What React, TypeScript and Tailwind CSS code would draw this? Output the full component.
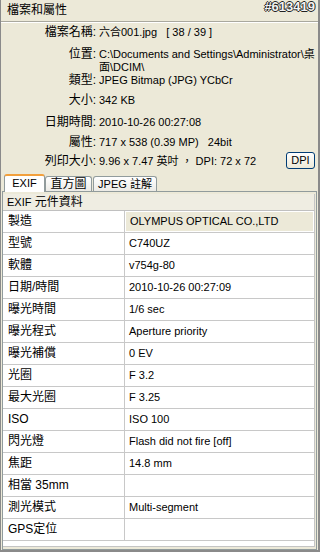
const rows: [string, string][] = [
  ["製造", "OLYMPUS OPTICAL CO.,LTD"],
  ["型號", "C740UZ"],
  ["軟體", "v754g-80"],
  ["日期/時間", "2010-10-26 00:27:09"],
  ["曝光時間", "1/6 sec"],
  ["曝光程式", "Aperture priority"],
  ["曝光補償", "0 EV"],
  ["光圈", "F 3.2"],
  ["最大光圈", "F 3.25"],
  ["ISO", "ISO 100"],
  ["閃光燈", "Flash did not fire [off]"],
  ["焦距", "14.8 mm"],
  ["相當 35mm", ""],
  ["測光模式", "Multi-segment"],
  ["GPS定位", ""],
];

type InfoRowProp = {
  label: string;
  className?: string;
  children: React.ReactNode;
};

function InfoRow({ label, className, children }: InfoRowProp) {
  return (
    <div className={`grid grid-cols-[96px_1fr] items-start leading-[13px] ${className ?? ""}`}>
      <div className="text-right text-[12px] whitespace-nowrap pr-[1px]">{label}</div>
      <div className="pl-[2px] text-[11px] whitespace-nowrap">{children}</div>
    </div>
  );
}

export default function App() {
  return (
    <div className="w-[320px] h-[552px] bg-[#ECE9D8] border-l border-r-2 border-b-2 border-[#8a8a8a] flex flex-col text-black font-['Tahoma','Liberation_Sans','Noto_Sans_CJK_TC',sans-serif] overflow-hidden">
      {/* title */}
      <div className="h-[22px] shrink-0 flex items-center justify-between pl-[6px] pr-[3px] border-b border-[#a9a89e] shadow-[0_1px_0_#ffffff]">
        <span className="text-[12px] leading-[13px]">檔案和屬性</span>
        <span className="text-[13px] font-bold leading-[13px] -mt-[8px] text-[#f2f2f2] [text-shadow:1px_0_0_#222,-1px_0_0_#222,0_1px_0_#222,0_-1px_0_#222]">
          #613419
        </span>
      </div>

      {/* file info */}
      <div className="flex flex-col pr-[3px]">
        <InfoRow label="檔案名稱:" className="mt-[4px]">
          六合001.jpg&nbsp;&nbsp;&nbsp;[ 38 / 39 ]
        </InfoRow>
        <InfoRow label="位置:" className="mt-[9px]">
          C:\Documents and Settings\Administrator\桌
          <br />
          面\DCIM\
        </InfoRow>
        <InfoRow label="類型:">JPEG Bitmap (JPG) YCbCr</InfoRow>
        <InfoRow label="大小:" className="mt-[7px]">
          342 KB
        </InfoRow>
        <InfoRow label="日期時間:" className="mt-[9px]">
          2010-10-26 00:27:08
        </InfoRow>
        <InfoRow label="屬性:" className="mt-[7px]">
          717 x 538 (0.39 MP)&nbsp;&nbsp;&nbsp;24bit
        </InfoRow>
        <div className="grid grid-cols-[96px_1fr] items-center mt-[4px] h-[17px]">
          <div className="text-right text-[12px] leading-[13px] pr-[1px]">列印大小:</div>
          <div className="pl-[2px] flex items-center justify-between text-[11px] leading-[13px]">
            <span>9.96 x 7.47 英吋 ，&nbsp;DPI: 72 x 72</span>
            <button className="w-[29px] h-[17px] -mt-[3px] rounded-[3px] border border-[#003c74] bg-gradient-to-b from-white to-[#ece9d8] text-[11px] leading-[13px]">
              DPI
            </button>
          </div>
        </div>
      </div>

      {/* tabs */}
      <div className="flex items-end pl-[3px] mt-[2px] h-[19px] shrink-0 relative z-10">
        <div className="w-[41px] h-[18px] bg-white border border-b-0 border-[#919b9c] border-t-[2px] border-t-[#f2a03c] rounded-t-[3px] flex items-center justify-center text-[11px] leading-[13px] -mb-px pb-[1px]">
          EXIF
        </div>
        <div className="w-[47px] h-[15px] bg-gradient-to-b from-white to-[#ecebe6] border border-b-0 border-[#919b9c] rounded-t-[3px] flex items-center justify-center text-[12px] leading-[13px]">
          直方圖
        </div>
        <div className="w-[64px] h-[15px] ml-[1px] bg-gradient-to-b from-white to-[#ecebe6] border border-b-0 border-[#919b9c] rounded-t-[3px] flex items-center justify-center text-[11px] leading-[13px]">
          JPEG 註解
        </div>
      </div>

      {/* panel */}
      <div className="flex-1 ml-[1px] mr-[1px] border border-[#919b9c] bg-[#ECE9D8] pt-[2px] pr-[1px] pb-[2px] flex flex-col">
        <div className="flex-1 bg-white border-r border-b border-[#c4c4c4] flex flex-col">
          <div className="h-[17px] shrink-0 bg-[#efede2] border-b border-[#c0c0c0] pl-[4px] flex items-center text-[12px] leading-[13px]">
            <span className="text-[11px]">EXIF</span>&nbsp;元件資料
          </div>
          {rows.map(([label, value], i) => (
            <div
              key={label}
              className="h-[22px] shrink-0 grid grid-cols-[122px_1fr] border-b border-[#c8c8c8]"
            >
              <div className="border-r border-[#c8c8c8] pl-[5px] flex items-center text-[12px] leading-[13px] whitespace-nowrap">
                {label}
              </div>
              <div
                className={`flex items-center pl-[4px] text-[11px] leading-[13px] whitespace-nowrap ${
                  i === 0 ? "bg-[#ECE9D8] m-[1px] pl-[3px]" : ""
                }`}
              >
                {value}
              </div>
            </div>
          ))}
        </div>
      </div>
    </div>
  );
}
